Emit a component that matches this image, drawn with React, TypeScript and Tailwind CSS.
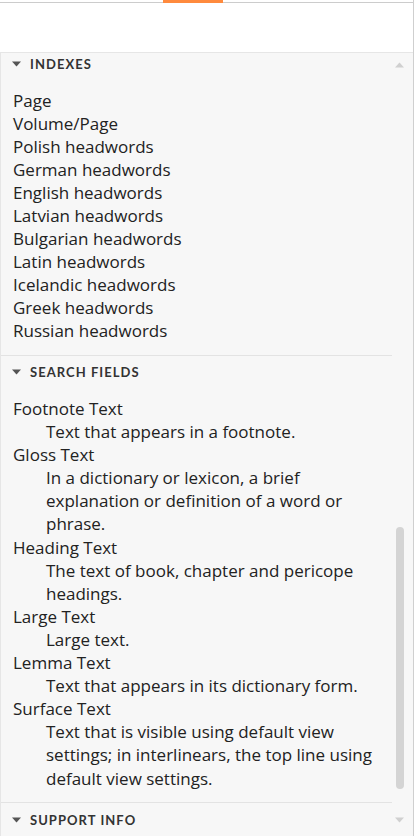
import React from "react";

const indexes = [
  "Page",
  "Volume/Page",
  "Polish headwords",
  "German headwords",
  "English headwords",
  "Latvian headwords",
  "Bulgarian headwords",
  "Latin headwords",
  "Icelandic headwords",
  "Greek headwords",
  "Russian headwords",
];

const fields: { name: string; lines: string[] }[] = [
  { name: "Footnote Text", lines: ["Text that appears in a footnote."] },
  {
    name: "Gloss Text",
    lines: ["In a dictionary or lexicon, a brief", "explanation or definition of a word or", "phrase."],
  },
  { name: "Heading Text", lines: ["The text of book, chapter and pericope", "headings."] },
  { name: "Large Text", lines: ["Large text."] },
  { name: "Lemma Text", lines: ["Text that appears in its dictionary form."] },
  {
    name: "Surface Text",
    lines: ["Text that is visible using default view", "settings; in interlinears, the top line using", "default view settings."],
  },
];

function Caret() {
  return (
    <svg width="9" height="6" viewBox="0 0 9 6" className="shrink-0">
      <path d="M0 0.5 L9 0.5 L4.5 5.5 Z" fill="#555" />
    </svg>
  );
}

function SectionHeader({ title }: { title: string }) {
  return (
    <div className="flex items-center gap-[9px] pl-[11px] h-[16px]">
      <Caret />
      <span
        className="text-[13px] leading-[16px] font-bold tracking-[0.08em] text-[#333]"
        style={{ fontFamily: "Lato, sans-serif" }}
      >
        {title}
      </span>
    </div>
  );
}

export default function App() {
  return (
    <div
      className="w-[414px] h-[836px] bg-white border-r border-[#cfcfcf] flex flex-col overflow-hidden text-[#222]"
      style={{ fontFamily: "'Open Sans', 'Noto Sans', sans-serif" }}
    >
      {/* tab strip */}
      <div className="flex h-[3px] shrink-0">
        <div className="w-[163px] border-b border-[#cccccc]" />
        <div className="w-[60px] bg-[#ff8a3d]" />
        <div className="flex-1 border-b border-[#cccccc]" />
      </div>
      <div className="h-[49px] shrink-0 bg-white" />

      {/* panel */}
      <div className="flex-1 flex bg-[#f7f7f7] border-t border-l border-[#e6e6e6] min-h-0">
        <div className="w-[391px] flex flex-col">
          <div className="pt-[3px] pb-[13px]">
            <SectionHeader title="INDEXES" />
            <div className="mt-[17px] pl-[12px] text-[17px] leading-[23px]">
              {indexes.map((i) => (
                <div key={i}>{i}</div>
              ))}
            </div>
          </div>

          <div className="border-t border-[#e3e3e3] pt-[8px] pb-[12px]">
            <SectionHeader title="SEARCH FIELDS" />
            <div className="mt-[17px] pl-[12px] text-[17px] leading-[23.1px]">
              {fields.map((f) => (
                <div key={f.name}>
                  <div>{f.name}</div>
                  <div className="pl-[33px]">
                    {f.lines.map((l) => (
                      <div key={l}>{l}</div>
                    ))}
                  </div>
                </div>
              ))}
            </div>
          </div>

          <div className="border-t border-[#e3e3e3] pt-[9px]">
            <SectionHeader title="SUPPORT INFO" />
          </div>
        </div>

        {/* scrollbar */}
        <div className="flex-1 flex flex-col items-center pr-[6px]">
          <svg width="9" height="6" viewBox="0 0 9 6" className="mt-[9px]">
            <path d="M4.5 0.5 L9 5.5 L0 5.5 Z" fill="#d0d0d0" />
          </svg>
          <div className="flex-1 w-[8px] flex flex-col justify-end pb-[28px]">
            <div className="h-[262px] rounded-[4px] bg-[#d4d4d4]" />
          </div>
          <svg width="9" height="6" viewBox="0 0 9 6" className="mb-[13px]">
            <path d="M0 0.5 L9 0.5 L4.5 5.5 Z" fill="#d0d0d0" />
          </svg>
        </div>
      </div>
    </div>
  );
}
